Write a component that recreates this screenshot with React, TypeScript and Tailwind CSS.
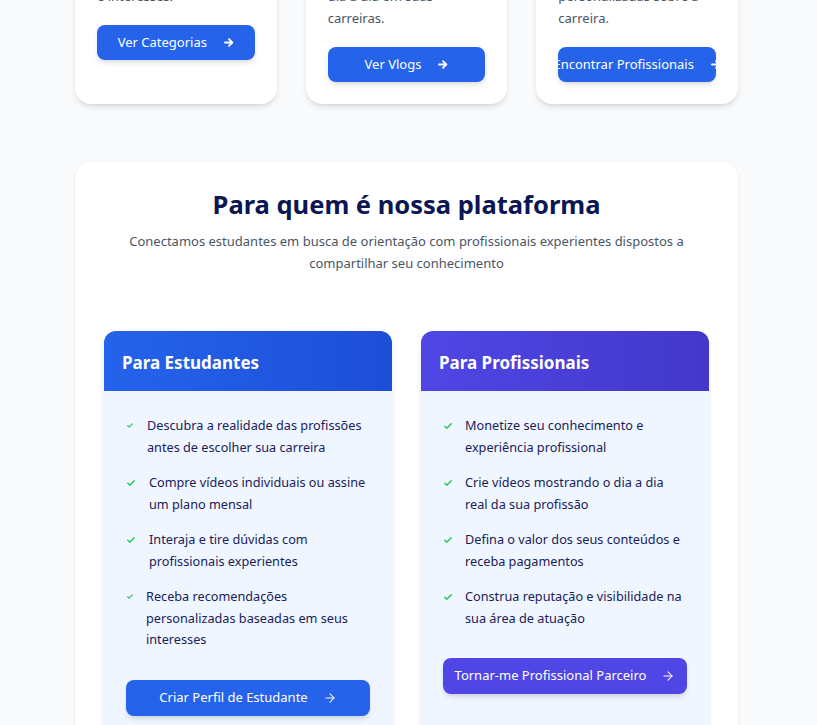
import { ArrowRight } from 'lucide-react';

const font = { fontFamily: '"Noto Sans", "Open Sans", sans-serif' };

function ShortArrow() {
  return (
    <svg width="10" height="9" viewBox="0 0 10 9" fill="none" className="shrink-0">
      <path d="M1 4.5h7M5 1.2l3.3 3.3L5 7.8" stroke="currentColor" strokeWidth="1.8" strokeLinecap="round" strokeLinejoin="round" />
    </svg>
  );
}

function Check({ small }: { small?: boolean }) {
  return (
    <svg width={small ? 6 : 8} height={small ? 5 : 6} viewBox="0 0 8 6" fill="none">
      <path d="M0.8 3.2l2 2L7.2 0.8" stroke="#22c55e" strokeWidth="1.4" strokeLinecap="round" strokeLinejoin="round" />
    </svg>
  );
}

const features = [
  {
    title: 'Categorias',
    lines: ['Encontre áreas por', 'e interesses.'],
    button: 'Ver Categorias',
  },
  {
    title: 'Vlogs',
    lines: ['Veja profissionais no', 'dia a dia em suas', 'carreiras.'],
    button: 'Ver Vlogs',
  },
  {
    title: 'Mentoria',
    lines: ['Receba orientações', 'personalizadas sobre a', 'carreira.'],
    button: 'Encontrar Profissionais',
  },
];

const students = [
  { text: 'Descubra a realidade das profissões antes de escolher sua carreira', slot: 'w-[21px]', small: true },
  { text: 'Compre vídeos individuais ou assine um plano mensal', slot: 'w-[23px]', small: false },
  { text: 'Interaja e tire dúvidas com profissionais experientes', slot: 'w-[23px]', small: false },
  { text: 'Receba recomendações personalizadas baseadas em seus interesses', slot: 'w-[20px]', small: true },
];

const pros = [
  { text: 'Monetize seu conhecimento e experiência profissional', slot: 'w-[22px]', small: false },
  { text: 'Crie vídeos mostrando o dia a dia real da sua profissão', slot: 'w-[22px]', small: false },
  { text: 'Defina o valor dos seus conteúdos e receba pagamentos', slot: 'w-[22px]', small: false },
  { text: 'Construa reputação e visibilidade na sua área de atuação', slot: 'w-[22px]', small: false },
];

function AudienceCard({
  title,
  header,
  items,
  button,
  buttonClass,
}: {
  title: string;
  header: string;
  items: { text: string; slot: string; small: boolean }[];
  button: string;
  buttonClass: string;
}) {
  return (
    <div className="rounded-xl overflow-hidden shadow-md bg-[#eff6ff]">
      <div className={`h-[60px] flex items-center px-[18px] pt-[3px] ${header}`}>
        <h3 className="text-[17px] font-bold text-white">{title}</h3>
      </div>
      <div className="px-[22px] pt-6 pb-10">
        <ul className="flex flex-col gap-[14px]">
          {items.map((it) => (
            <li key={it.text} className="flex text-[12.7px] leading-[21.5px] text-[#1a2159]">
              <span className={`shrink-0 h-[21.5px] flex items-center pl-[1px] ${it.slot}`}>
                <Check small={it.small} />
              </span>
              <span>{it.text}</span>
            </li>
          ))}
        </ul>
        <button
          className={`mt-[29px] w-full h-9 rounded-lg text-white text-[13px] flex items-center justify-center gap-[15px] shadow-md ${buttonClass}`}
        >
          {button}
          <ArrowRight size={14} strokeWidth={1.8} />
        </button>
      </div>
    </div>
  );
}

export default function App() {
  return (
    <div className="min-h-screen bg-[#f8fafc] overflow-hidden" style={font}>
      <div className="w-[663px] ml-[75px] pb-16">
        <div className="grid grid-cols-3 gap-[29px] -mt-[95px]">
          {features.map((f) => (
            <div key={f.title} className="bg-white rounded-2xl shadow-md p-[22px]">
              <h3 className="text-lg leading-7 font-semibold text-[#0d1b57] mb-2 whitespace-nowrap">{f.title}</h3>
              <p className="text-[13px] leading-[22px] text-gray-600">
                {f.lines.map((l) => (
                  <span key={l} className="block whitespace-nowrap">
                    {l}
                  </span>
                ))}
              </p>
              <button className="mt-[18px] w-full h-[35px] rounded-lg bg-[#2563eb] text-white text-[13px] flex items-center justify-center gap-[17px] shadow-md">
                <span className="whitespace-nowrap">{f.button}</span>
                <ShortArrow />
              </button>
            </div>
          ))}
        </div>

        <section className="mt-[58px] bg-white rounded-2xl shadow-sm px-[29px] pt-[26px] pb-10">
          <h2 className="text-[25.5px] leading-8 font-bold text-center text-[#0c1654]">Para quem é nossa plataforma</h2>
          <p className="mt-[10px] max-w-xl mx-auto text-center text-[13px] leading-[22px] text-gray-600">
            Conectamos estudantes em busca de orientação com profissionais experientes dispostos a compartilhar seu
            conhecimento
          </p>
          <div className="mt-[57px] grid grid-cols-2 gap-[29px] items-start">
            <AudienceCard
              title="Para Estudantes"
              header="bg-gradient-to-r from-[#2563eb] to-[#1d4ed8]"
              items={students}
              button="Criar Perfil de Estudante"
              buttonClass="bg-[#2563eb]"
            />
            <AudienceCard
              title="Para Profissionais"
              header="bg-gradient-to-r from-[#4f46e5] to-[#4338ca]"
              items={pros}
              button="Tornar-me Profissional Parceiro"
              buttonClass="bg-[#4f46e5]"
            />
          </div>
        </section>
      </div>
    </div>
  );
}
